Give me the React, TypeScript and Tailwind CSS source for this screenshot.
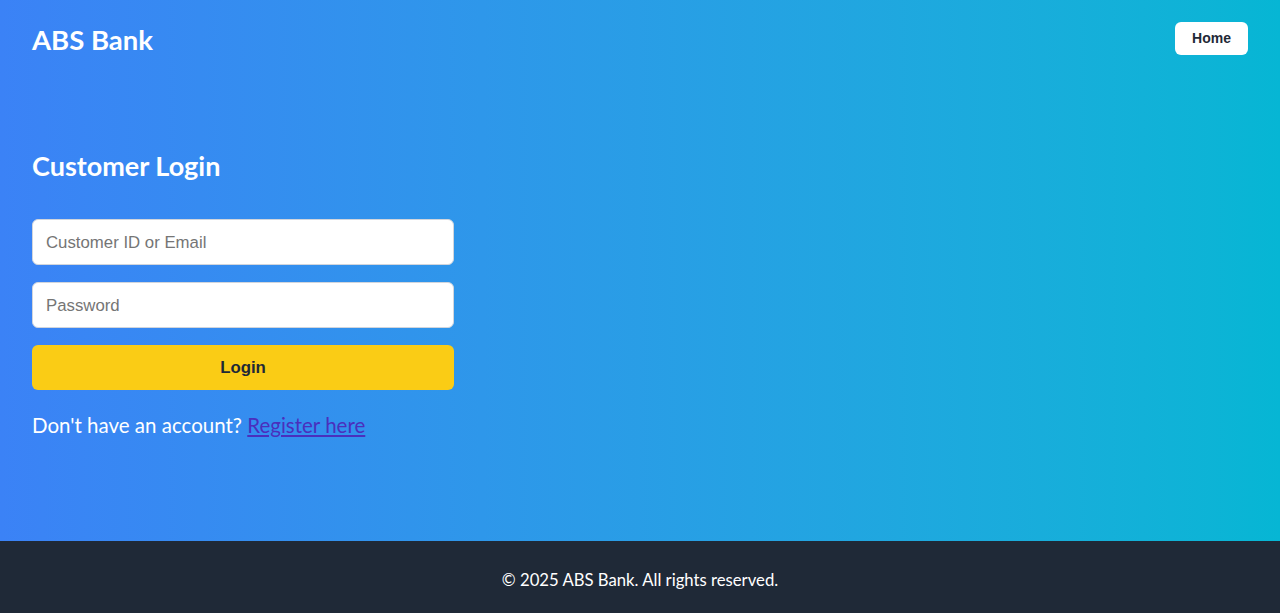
import React from 'react';

export default function App() {
  return (
    <div className="min-h-screen flex flex-col font-['Lato','Noto_Sans',sans-serif]">
      <div className="flex-1 flex flex-col bg-gradient-to-r from-[#3b82f6] to-[#06b6d4] text-white">
        {/* Header */}
        <header className="h-20 px-8 flex items-center justify-between">
          <h1 className="text-[27.5px] font-bold">ABS Bank</h1>
          <button className="h-[33px] -mt-1 px-[17px] rounded-md bg-white text-[#1f2937] text-sm font-bold font-['Liberation_Sans',Arial,sans-serif]">
            Home
          </button>
        </header>

        {/* Login form */}
        <main className="flex-1 px-8 pt-[70px]">
          <h2 className="text-[27px] leading-8 font-bold mb-[37px]">Customer Login</h2>
          <form className="w-[422px] flex flex-col gap-[17px] font-['Liberation_Sans',Arial,sans-serif]">
            <input
              type="text"
              placeholder="Customer ID or Email"
              className="h-[46px] px-[13px] pt-[2px] rounded-md bg-white border border-gray-300 text-[16.8px] text-gray-800 placeholder:text-[#757575] outline-none"
            />
            <input
              type="password"
              placeholder="Password"
              className="h-[46px] px-[13px] pt-[2px] rounded-md bg-white border border-gray-300 text-[16.8px] text-gray-800 placeholder:text-[#757575] outline-none"
            />
            <button
              type="button"
              className="h-[45px] rounded-md bg-[#facc15] text-[#1f2937] text-[16.8px] font-bold"
            >
              Login
            </button>
          </form>
          <p className="mt-[21px] text-[20.5px] leading-7">
            Don't have an account?{' '}
            <a href="#" className="text-[#4a2fbd] underline">Register here</a>
          </p>
        </main>
      </div>

      {/* Footer */}
      <footer className="h-[72px] bg-[#1f2937] text-white flex items-center justify-center pt-[8px]">
        <p className="text-[16.7px]">© 2025 ABS Bank. All rights reserved.</p>
      </footer>
    </div>
  );
}
